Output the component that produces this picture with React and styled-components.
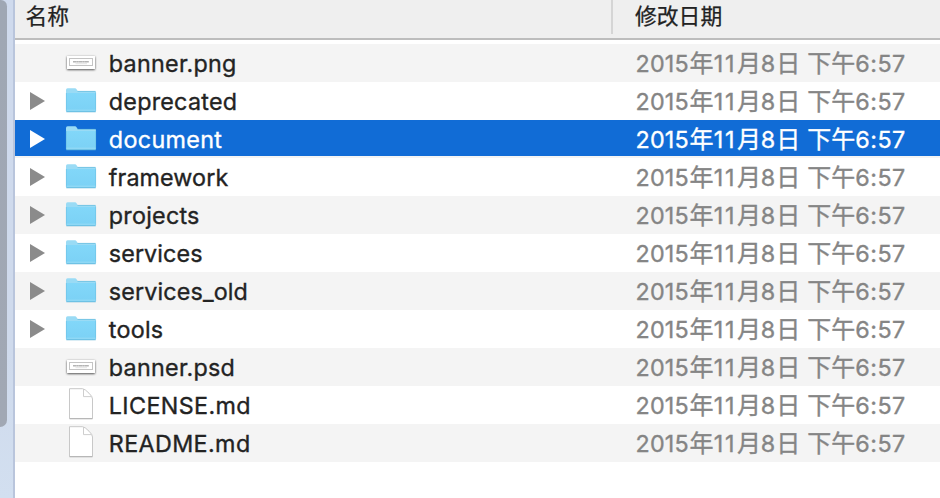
import React from "react";
import styled, { createGlobalStyle } from "styled-components";

const GlobalStyle = createGlobalStyle`
  * { box-sizing: border-box; }
  body { margin: 0; background: #fff; overflow: hidden; }
`;

const Window = styled.div`
  display: grid;
  grid-template-columns: 15px 1fr;
  width: 940px;
  height: 498px;
  overflow: hidden;
  background: #fff;
  color: #232323;
  font-family: Inter, "Noto Sans CJK SC", sans-serif;
`;

const Gutter = styled.div`
  background: linear-gradient(#cfdaed, #cfdaec 70%, #d2dff0);
  border-right: 2px solid #b9c5dc;
`;

const ScrollThumb = styled.div`
  width: 7px;
  height: 427px;
  background: linear-gradient(#9fa7b4, #a1a8b4);
  border-radius: 0 7px 8px 0;
`;

const Pane = styled.div`
  min-width: 0;
`;

const Header = styled.div`
  display: grid;
  grid-template-columns: 596px 1fr;
  height: 40px;
  background: #efefef;
  border-bottom: 2px solid #bdbdbd;
  font: 21.8px/30px "Noto Sans CJK SC", sans-serif;
  -webkit-text-stroke: 0.25px currentColor;
  color: #222;
`;

const HeaderCell = styled.div`
  height: 34px;
  padding-left: ${(p) => (p.$divided ? 22 : 10.5)}px;
  border-left: ${(p) => (p.$divided ? "2px solid #d5d5d5" : "0")};
`;

const List = styled.div`
  padding-top: 4px;
`;

const Row = styled.div`
  display: grid;
  grid-template-columns: 51px 42.8px 526.7px 1fr;
  height: 38px;
  color: ${(p) => (p.$selected ? "#fff" : "#232323")};
  background: ${(p) =>
    p.$selected
      ? "linear-gradient(#116cd6 36px, #f4f4f4 36px)"
      : p.$striped
      ? "#f4f4f4"
      : "#fff"};
`;

const Disclosure = styled.svg`
  width: 15px;
  height: 18px;
  margin: 10px 0 0 15px;
  fill: ${(p) => (p.$selected ? "#fff" : "#8b8b8b")};
`;

const IconSvg = styled.svg`
  display: block;
  width: 32px;
  height: 38px;
  margin-left: -1px;
`;

const Name = styled.div`
  font-size: 23.3px;
  line-height: 40px;
  white-space: nowrap;
  letter-spacing: ${(p) => p.$tracking}px;
  -webkit-text-stroke: 0.35px currentColor;
`;

const DateCell = styled.div`
  display: flex;
  height: 38px;
  white-space: nowrap;
  color: ${(p) => (p.$selected ? "#fff" : "#858585")};
  -webkit-text-stroke: 0.35px currentColor;
`;

const Digits = styled.span`
  width: ${(p) => p.$w}px;
  font-size: 23.3px;
  line-height: 40px;
  letter-spacing: ${(p) => p.$tracking || 0}px;
`;

const Hanzi = styled.span`
  width: ${(p) => p.$w}px;
  font: 24px/36px "Noto Sans CJK SC", sans-serif;
`;

function FolderIcon() {
  return (
    <IconSvg viewBox="0 0 32 38">
      <defs>
        <linearGradient id="folder" x1="0" y1="0" x2="0" y2="1">
          <stop offset="0" stopColor="#82d7f9" />
          <stop offset="1" stopColor="#7bd1f5" />
        </linearGradient>
      </defs>
      <path d="M1 8Q1 6.3 2.6 6.3H10Q11 6.3 11.7 7.5L12.7 9H29.5Q31 9 31 10.3V29H1Z" fill="#9adbf5" />
      <path d="M1 12Q1 11 2.5 11H29.5Q31 11 31 12V28.5Q31 30 29.8 30H2.2Q1 30 1 28.5Z" fill="url(#folder)" />
      <path d="M12.5 9.4H30.5" stroke="#6cbfe0" strokeWidth="0.8" />
      <path d="M1.4 11V29M30.6 10.5V29" stroke="#70c3e6" strokeWidth="0.7" />
      <path d="M1.5 28.2H30.5" stroke="#99dbf5" />
      <path d="M1.3 29.8H30.7" stroke="#64b5d7" strokeWidth="0.8" />
    </IconSvg>
  );
}

function BannerIcon() {
  return (
    <IconSvg viewBox="0 0 32 38">
      <defs>
        <filter id="shade" x="-20%" y="-30%" width="140%" height="180%">
          <feDropShadow dx="0" dy="0.8" stdDeviation="0.8" floodOpacity="0.75" />
        </filter>
      </defs>
      <rect x="2" y="12" width="28" height="13" fill="#fff" filter="url(#shade)" />
      <rect x="4.5" y="14.5" width="23" height="7" fill="none" stroke="#c4c4c4" />
      <path d="M8 17.7H24" stroke="#b4b4b4" strokeWidth="1.5" strokeDasharray="3.2 .2 2.3 .2" />
      <path d="M10.5 19.7H22" stroke="#dcdcdc" strokeWidth="0.8" />
    </IconSvg>
  );
}

function DocumentIcon() {
  return (
    <IconSvg viewBox="0 0 32 38">
      <path d="M4.5 2.7H17.5Q20 3 24 7.2Q27.5 10.5 27.5 13V32.5H4.5Z" fill="#fff" stroke="#c8c8c8" strokeLinejoin="round" />
      <path d="M4.5 32.8H27.5" stroke="#a8a8a8" strokeWidth="0.8" />
      <path d="M18.5 3.2V10.6H26.3" fill="none" stroke="#c8c8c8" strokeWidth="0.9" />
    </IconSvg>
  );
}

const icons = { folder: FolderIcon, banner: BannerIcon, document: DocumentIcon };

const files = [
  { name: "banner.png", kind: "banner", tracking: 0.28 },
  { name: "deprecated", kind: "folder", tracking: 0.25 },
  { name: "document", kind: "folder", tracking: 0.35, selected: true },
  { name: "framework", kind: "folder", tracking: 0.1 },
  { name: "projects", kind: "folder", tracking: 0.25 },
  { name: "services", kind: "folder", tracking: 0.1 },
  { name: "services_old", kind: "folder", tracking: 0.15 },
  { name: "tools", kind: "folder", tracking: 0.25 },
  { name: "banner.psd", kind: "banner", tracking: 0.28 },
  { name: "LICENSE.md", kind: "document", tracking: 0.38 },
  { name: "README.md", kind: "document", tracking: 0.38 },
];

function ModifiedDate({ selected }) {
  return (
    <DateCell $selected={selected}>
      <Digits $w={54} $tracking={0.2}>2015</Digits>
      <Hanzi $w={24.3}>年</Hanzi>
      <Digits $w={23.2} $tracking={1.8}>11</Digits>
      <Hanzi $w={23.8}>月</Hanzi>
      <Digits $w={15.5}>8</Digits>
      <Hanzi $w={31}>日 </Hanzi>
      <Hanzi $w={48}>下午</Hanzi>
      <Digits $w={51} $tracking={0.5}>6:57</Digits>
    </DateCell>
  );
}

function FileRow({ file, striped }) {
  const Icon = icons[file.kind];
  return (
    <Row $selected={file.selected} $striped={striped}>
      <div>
        {file.kind === "folder" && (
          <Disclosure viewBox="0 0 15 18" $selected={file.selected}>
            <path d="M0 0L15 9L0 18Z" />
          </Disclosure>
        )}
      </div>
      <Icon />
      <Name $tracking={file.tracking}>{file.name}</Name>
      <ModifiedDate selected={file.selected} />
    </Row>
  );
}

export default function App() {
  return (
    <>
      <GlobalStyle />
      <Window>
        <Gutter>
          <ScrollThumb />
        </Gutter>
        <Pane>
          <Header>
            <HeaderCell>名称</HeaderCell>
            <HeaderCell $divided>修改日期</HeaderCell>
          </Header>
          <List>
            {files.map((file, i) => (
              <FileRow key={file.name} file={file} striped={i % 2 === 0} />
            ))}
          </List>
        </Pane>
      </Window>
    </>
  );
}
